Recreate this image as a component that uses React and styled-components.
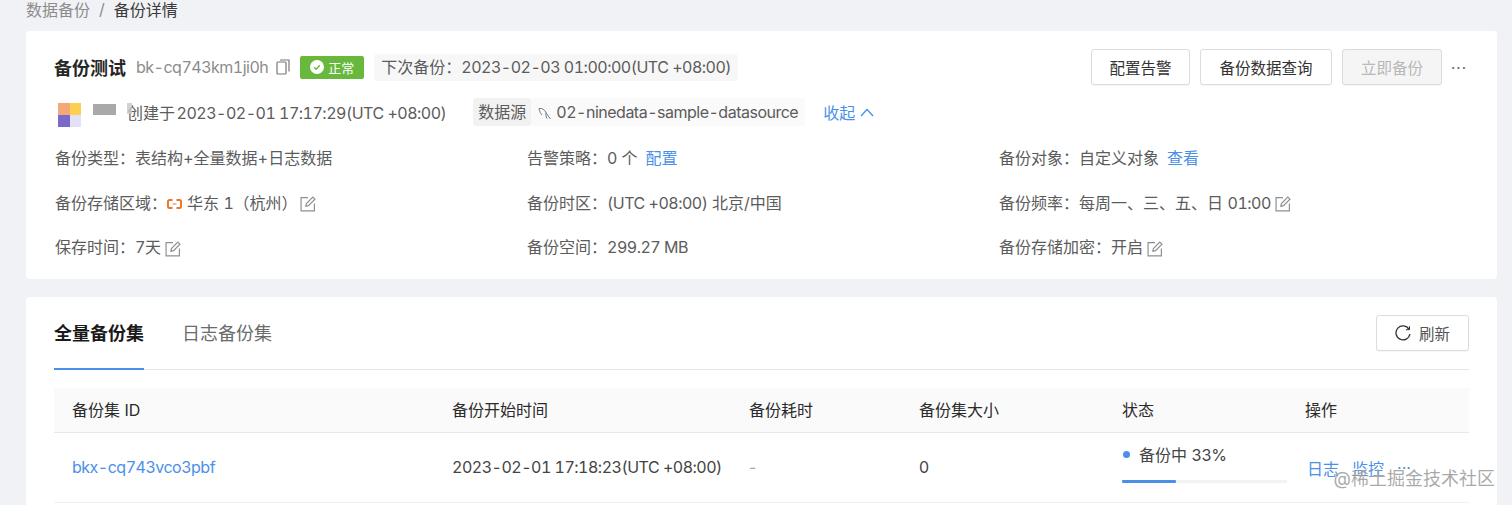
import React from "react";
import styled, { createGlobalStyle } from "styled-components";

const colors = {
  page: "#f0f2f5",
  text: "#5c5c5c",
  dark: "#1f1f1f",
  muted: "#8c8c8c",
  link: "#4a90e8",
  line: "#e8e8e8",
};

const GlobalStyle = createGlobalStyle`
  html, body {
    margin: 0;
    padding: 0;
    height: 505px;
    overflow: hidden;
    background: ${colors.page};
    font-family: Inter, "Noto Sans CJK SC", "Liberation Sans", sans-serif;
    color: ${colors.text};
  }
`;

const Page = styled.div`
  position: relative;
  height: 505px;
  padding: 0 15px 0 26px;
  overflow: hidden;
  font-size: 16px;
`;

// latin strings and numbers: the original font has even digits and is a bit tighter
const Num = styled.span`
  font-variant-numeric: tabular-nums;
  letter-spacing: -0.5px;
`;

const Breadcrumb = styled.div`
  display: flex;
  align-items: center;
  gap: 9px;
  height: 18px;
  font-size: 16px;
  color: ${colors.muted};
  margin-bottom: 13px;
  .current {
    color: #3a3a3a;
  }
`;

const Card = styled.section`
  background: #fff;
  border-radius: 4px;
`;

const SummaryCard = styled(Card)`
  height: 248px;
  padding: 18px 28px 0 28px;
  margin-bottom: 18px;
  box-sizing: border-box;
`;

const HeaderRow = styled.div`
  display: flex;
  align-items: center;
  height: 36px;
`;

const Title = styled.h1`
  margin: 0;
  font-size: 18px;
  font-weight: 600;
  color: #262626;
`;

const InstanceId = styled(Num)`
  margin-left: 10px;
  color: ${colors.muted};
`;

const IconSlot = styled.span`
  display: inline-flex;
  vertical-align: middle;
  margin-left: ${(p) => p.$left || 0}px;
  margin-right: ${(p) => p.$right || 0}px;
  color: ${(p) => p.$color || "inherit"};
`;

const StatusBadge = styled.span`
  display: inline-flex;
  align-items: center;
  gap: 4px;
  width: 64px;
  height: 23px;
  margin-left: 10px;
  justify-content: center;
  box-sizing: border-box;
  border-radius: 2px;
  background: #67b83c;
  color: #fff;
  font-size: 13px;
`;

const Chip = styled.span`
  display: inline-block;
  height: ${(p) => p.$height || 27}px;
  line-height: ${(p) => p.$height || 27}px;
  padding: 0 ${(p) => p.$pad ?? 7}px;
  border-radius: 3px;
  background: ${(p) => p.$bg || "#f7f7f7"};
  white-space: nowrap;
`;

const Actions = styled.div`
  display: flex;
  align-items: center;
  gap: 10px;
  margin-left: auto;
`;

const Button = styled.button`
  height: 36px;
  width: ${(p) => p.$width}px;
  padding: 0;
  box-sizing: border-box;
  border: 1px solid #dcdcdc;
  border-radius: 3px;
  background: ${(p) => (p.disabled ? "#f5f5f5" : "#fff")};
  color: ${(p) => (p.disabled ? "#b8b8b8" : "#333")};
  box-shadow: 0 1px 1px rgba(0, 0, 0, 0.04);
  font: inherit;
  font-size: 15.5px;
  display: inline-flex;
  align-items: center;
  justify-content: center;
  gap: 8px;
`;

const Dots = styled.span`
  width: 20px;
  margin-left: -3px;
  text-align: center;
  font-size: 15px;
  letter-spacing: 1px;
  line-height: 1;
  color: #666;
`;

const MetaRow = styled.div`
  display: flex;
  align-items: center;
  height: 28px;
  margin-top: 13px;
  padding-left: 4px;
`;

const Avatar = styled.span`
  display: grid;
  grid-template-columns: 12px 11px;
  grid-template-rows: 12px 12px;
  width: 23px;
  height: 24px;
  margin-top: 5px;
  margin-right: 12px;
`;

const AvatarCell = styled.i`
  display: block;
  background: ${(p) => p.$color};
`;

const MaskedName = styled.span`
  width: 23px;
  height: 11px;
  margin-right: 11px;
  margin-top: -6px;
  background: #a9a9a9;
`;

const Created = styled.span`
  position: relative;
  margin-right: 27px;
  white-space: nowrap;
  /* the redaction smudge over the first glyph */
  &::before {
    content: "";
    position: absolute;
    left: 0;
    top: 3px;
    width: 5px;
    height: 11px;
    background: rgba(200, 200, 200, 0.8);
  }
`;

const CreatedAt = styled(Num)`
  margin-left: -3px;
`;

const CollapseLink = styled.a`
  display: inline-flex;
  align-items: center;
  gap: 5px;
  margin-left: 18px;
  color: ${colors.link};
`;

const InfoGrid = styled.div`
  display: grid;
  grid-template-columns: repeat(3, 472px);
  grid-auto-rows: 44.5px;
  margin-top: 10px;
  margin-left: 1px;
`;

const InfoItem = styled.div`
  line-height: 44.5px;
  white-space: nowrap;
`;

const Link = styled.a`
  color: ${colors.link};
  margin-left: ${(p) => p.$left || 0}px;
`;

const BackupCard = styled(Card)`
  height: 300px;
  padding: 0 28px;
`;

const TabBar = styled.div`
  display: flex;
  align-items: center;
  height: 72px;
  border-bottom: 1px solid ${colors.line};
`;

const Tab = styled.div`
  position: relative;
  height: 72px;
  line-height: 74px;
  margin-right: 38px;
  font-size: 18px;
  font-weight: ${(p) => (p.$active ? 600 : 400)};
  color: ${(p) => (p.$active ? "#1a1a1a" : "#6b6b6b")};
  ${(p) =>
    p.$active &&
    `
    &::after {
      content: "";
      position: absolute;
      left: 0;
      right: 0;
      bottom: -1px;
      height: 2px;
      background: ${colors.link};
    }
  `}
`;

const RefreshButton = styled(Button)`
  margin-left: auto;
  margin-bottom: 1px;
  color: #555;
`;

const TableRow = styled.div`
  display: grid;
  grid-template-columns: 380px 297px 170px 203px 183px 182px;
`;

const HeadRow = styled(TableRow)`
  margin-top: 18px;
  height: 45px;
  padding-bottom: 1px;
  box-sizing: border-box;
  background: #fafafa;
  border-bottom: 1px solid ${colors.line};
  color: #2b2b2b;
`;

const BodyRow = styled(TableRow)`
  height: 70px;
  box-sizing: border-box;
  border-bottom: 1px solid #f0f0f0;
  color: #444;
`;

const Cell = styled.div`
  display: flex;
  align-items: center;
  padding-left: 18px;
  padding-bottom: 1px;
  white-space: nowrap;
  &.id {
    color: ${colors.link};
  }
  &.none {
    color: #aaa;
  }
`;

const StatusCell = styled.div`
  padding: 11px 0 0 18px;
`;

const StatusLabel = styled.div`
  display: flex;
  align-items: center;
  height: 20px;
  i {
    width: 7px;
    height: 7px;
    border-radius: 50%;
    background: ${colors.link};
    margin: 0 9px 0 1px;
  }
`;

const Progress = styled.div`
  width: 165px;
  height: 3px;
  margin-top: 16px;
  background: #f2f2f2;
  border-radius: 1px;
`;

const ProgressFill = styled.div`
  height: 100%;
  border-radius: 1px;
  background: ${colors.link};
`;

const OpsCell = styled.div`
  display: flex;
  align-items: center;
  gap: 13px;
  padding-left: 20px;
  color: ${colors.link};
  white-space: nowrap;
`;

const Watermark = styled.div`
  position: absolute;
  right: 17px;
  top: 468px;
  font-size: 18px;
  line-height: 21px;
  color: rgba(110, 110, 110, 0.6);
  text-shadow: 0 0 2px rgba(255, 255, 255, 0.9);
  white-space: nowrap;
`;

const EditIcon = ({ left = 6 }) => (
  <IconSlot $left={left} $color="#8f8f8f">
    <svg width="16" height="16" viewBox="0 0 15 15" fill="none" stroke="currentColor" strokeWidth="1.1">
      <path d="M7.5 1.5H1v12.5h12.5V7" />
      <path d="M5.5 9.5l.5-2.5 6-6 2 2-6 6z" />
    </svg>
  </IconSlot>
);

const CopyIcon = () => (
  <svg width="14" height="16" viewBox="0 0 14 16" fill="none" stroke="#777" strokeWidth="1.2">
    <rect x="1" y="3" width="9" height="12" rx="1" />
    <path d="M4 1h9v11.5" />
  </svg>
);

const CheckIcon = () => (
  <svg width="14" height="14" viewBox="0 0 14 14">
    <circle cx="7" cy="7" r="7" fill="#fff" />
    <path d="M4.2 7.2l2 2 3.6-4" fill="none" stroke="#67b83c" strokeWidth="1.3" />
  </svg>
);

const DolphinIcon = () => (
  <svg width="14" height="14" viewBox="0 0 14 14" fill="none" stroke="#6b7f95" strokeWidth="1">
    <path d="M1 1.5c3-.5 5.500 1 7 4 .8 1.700 2 3.500 4.500 6.500" />
    <path d="M1 1.500c.5 3 1.500 5 3 6.500M8 5.500c-.5 2 0 4 1 6" />
  </svg>
);

const AliyunIcon = () => (
  <svg width="15" height="10" viewBox="0 0 15 10" fill="none" stroke="#e8792b" strokeWidth="2">
    <path d="M5.500 1H2.500C1.600 1 1 1.600 1 2.500v5C1 8.400 1.600 9 2.500 9h3" />
    <path d="M9.500 1h3c.9 0 1.500.6 1.500 1.500v5c0 .9-.6 1.500-1.500 1.500h-3" />
    <path d="M5.500 5h4" strokeWidth="1" />
  </svg>
);

const ChevronUp = () => (
  <svg width="14" height="9" viewBox="0 0 14 9" fill="none" stroke="currentColor" strokeWidth="1.3">
    <path d="M1 8l6-6.500L13 8" />
  </svg>
);

const RefreshIcon = () => (
  <svg width="16" height="16" viewBox="0 0 16 16" fill="none" stroke="#333" strokeWidth="1.3">
    <path d="M14 4.300A7 7 0 1 0 14.900 9" />
    <path d="M14.500 1.200v3.500H11" strokeWidth="1" />
  </svg>
);

const columns = ["备份集 ID", "备份开始时间", "备份耗时", "备份集大小", "状态", "操作"];

const App = () => {
  const progress = 33;

  return (
    <Page>
      <GlobalStyle />
      <Breadcrumb>
        <span>数据备份</span>
        <span>/</span>
        <span className="current">备份详情</span>
      </Breadcrumb>

      <SummaryCard>
        <HeaderRow>
          <Title>备份测试</Title>
          <InstanceId>bk-cq743km1ji0h</InstanceId>
          <IconSlot $left={8}><CopyIcon /></IconSlot>
          <StatusBadge><CheckIcon />正常</StatusBadge>
          <IconSlot $left={10}>
            <Chip>下次备份：<Num>2023-02-03 01:00:00(UTC +08:00)</Num></Chip>
          </IconSlot>
          <Actions>
            <Button $width={99}>配置告警</Button>
            <Button $width={132}>备份数据查询</Button>
            <Button $width={100} disabled>立即备份</Button>
            <Dots>···</Dots>
          </Actions>
        </HeaderRow>

        <MetaRow>
          <Avatar>
            <AvatarCell $color="#f3a977" />
            <AvatarCell $color="#fbd04f" />
            <AvatarCell $color="#7c68c9" />
            <AvatarCell $color="#e4e0f5" />
          </Avatar>
          <MaskedName />
          <Created>创建于 <CreatedAt>2023-02-01 17:17:29(UTC +08:00)</CreatedAt></Created>
          <Chip $bg="#f2f2f2" $pad={5} $height={28}>数据源</Chip>
          <Chip $bg="#fafafa" $height={28}>
            <IconSlot $right={4}><DolphinIcon /></IconSlot>
            <Num>02-ninedata-sample-datasource</Num>
          </Chip>
          <CollapseLink>收起 <ChevronUp /></CollapseLink>
        </MetaRow>

        <InfoGrid>
          <InfoItem>备份类型：表结构+全量数据+日志数据</InfoItem>
          <InfoItem>告警策略：<Num>0</Num> 个<Link $left={8}>配置</Link></InfoItem>
          <InfoItem>备份对象：自定义对象<Link $left={8}>查看</Link></InfoItem>

          <InfoItem>
            备份存储区域：<IconSlot $right={5}><AliyunIcon /></IconSlot>华东 <Num>1</Num>（杭州）<EditIcon left={3} />
          </InfoItem>
          <InfoItem>备份时区：<Num>(UTC +08:00)</Num> 北京/中国</InfoItem>
          <InfoItem>备份频率：每周一、三、五、日 <Num>01:00</Num><EditIcon left={4} /></InfoItem>

          <InfoItem>保存时间：<Num>7</Num>天<EditIcon left={4} /></InfoItem>
          <InfoItem>备份空间：<Num>299.27 MB</Num></InfoItem>
          <InfoItem>备份存储加密：开启<EditIcon left={4} /></InfoItem>
        </InfoGrid>
      </SummaryCard>

      <BackupCard>
        <TabBar>
          <Tab $active>全量备份集</Tab>
          <Tab>日志备份集</Tab>
          <RefreshButton $width={93}><RefreshIcon />刷新</RefreshButton>
        </TabBar>

        <HeadRow>
          {columns.map((name) => (
            <Cell key={name}>{name}</Cell>
          ))}
        </HeadRow>

        <BodyRow>
          <Cell className="id"><Num>bkx-cq743vco3pbf</Num></Cell>
          <Cell><Num>2023-02-01 17:18:23(UTC +08:00)</Num></Cell>
          <Cell className="none">-</Cell>
          <Cell>0</Cell>
          <StatusCell>
            <StatusLabel><i /><span>备份中 <Num>{progress}%</Num></span></StatusLabel>
            <Progress>
              <ProgressFill style={{ width: `${progress}%` }} />
            </Progress>
          </StatusCell>
          <OpsCell>
            <span>日志</span>
            <span>监控</span>
            <span>···</span>
          </OpsCell>
        </BodyRow>
      </BackupCard>

      <Watermark>@稀土掘金技术社区</Watermark>
    </Page>
  );
};

export default App;
